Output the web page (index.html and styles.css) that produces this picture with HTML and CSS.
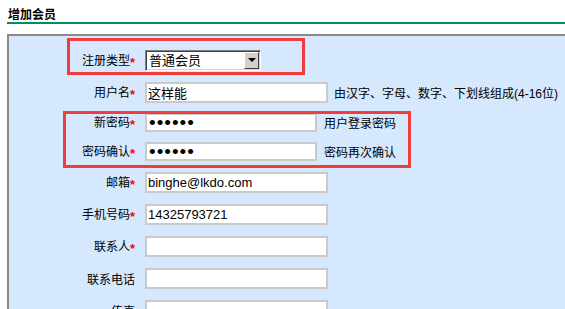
FILE: index.html
```html
<!DOCTYPE html>
<html lang="zh-CN">
  <head>
    <meta charset="UTF-8" />
    <meta name="viewport" content="width=device-width, initial-scale=1.0" />
    <title>增加会员</title>
    <link rel="stylesheet" href="styles.css">
  </head>
  <body>
    <div class="page">
      <h2 class="page-title">增加会员</h2>

      <form class="form-panel">
        <div class="row-group mark-type">
          <div class="form-row">
            <label class="form-label">注册类型<span class="req">*</span></label>
            <div class="select-box">
              <select class="select-field">
                <option>普通会员</option>
                <option>高级会员</option>
              </select>
              <span class="select-btn"><span class="select-arrow"></span></span>
            </div>
          </div>
        </div>

        <div class="form-row">
          <label class="form-label">用户名<span class="req">*</span></label>
          <input type="text" class="text-input" value="这样能" />
          <span class="hint">由汉字、字母、数字、下划线组成(4-16位)</span>
        </div>

        <div class="row-group mark-pass">
          <div class="form-row row-short">
            <label class="form-label">新密码<span class="req">*</span></label>
            <input type="password" class="text-input pass-input" value="123456" />
            <span class="hint hint-pass">用户登录密码</span>
          </div>
          <div class="form-row row-short">
            <label class="form-label">密码确认<span class="req">*</span></label>
            <input type="password" class="text-input pass-input" value="123456" />
            <span class="hint hint-pass">密码再次确认</span>
          </div>
        </div>

        <div class="form-row">
          <label class="form-label">邮箱<span class="req">*</span></label>
          <input type="text" class="text-input" value="binghe@lkdo.com" />
        </div>
        <div class="form-row">
          <label class="form-label">手机号码<span class="req">*</span></label>
          <input type="text" class="text-input" value="14325793721" />
        </div>
        <div class="form-row">
          <label class="form-label">联系人<span class="req">*</span></label>
          <input type="text" class="text-input" />
        </div>
        <div class="form-row">
          <label class="form-label">联系电话</label>
          <input type="text" class="text-input" />
        </div>
        <div class="form-row">
          <label class="form-label">传真</label>
          <input type="text" class="text-input" />
        </div>
      </form>
    </div>
  </body>
</html>
```

FILE: styles.css
```css
* {
  font-family: "Liberation Sans", "Noto Sans CJK SC", sans-serif;
}
html,
body {
  margin: 0;
  padding: 0;
  overflow: hidden;
  background-color: #fff;
}
.page {
  margin-left: 7px;
}
.page-title {
  margin: 0 0 10px 0;
  padding: 8px 0 0 1px;
  font-size: 12px;
  line-height: 14px;
  font-weight: bold;
  color: #000;
  border-bottom: 2px solid #00905a;
}
.form-panel {
  margin: 0;
  padding: 8px 0 40px 0;
  background-color: #d5e8fd;
  border-top: 2px solid #8a8a8a;
  border-left: 2px solid #8a8a8a;
}
.row-group {
  position: relative;
}
.form-row {
  display: flex;
  align-items: center;
  height: 32px;
}
.row-short {
  height: 29px;
}
.form-label {
  width: 136px;
  padding-right: 10px;
  box-sizing: border-box;
  text-align: right;
  font-size: 12px;
  color: #000;
}
.req {
  color: #f00;
  font-weight: bold;
  font-size: 13px;
  vertical-align: -2px;
}
.text-input {
  width: 183px;
  height: 21px;
  box-sizing: border-box;
  margin: 0;
  padding: 0 1px;
  border: 2px solid #cacaca;
  background-color: #fff;
  font-size: 13px;
  color: #000;
  outline: none;
}
.pass-input {
  width: 172px;
  height: 19px;
  padding: 0 2px;
  font-size: 19px;
  line-height: 15px;
  letter-spacing: 1px;
}
.hint {
  margin-left: 6px;
  font-size: 12px;
  color: #000;
  white-space: nowrap;
}
.hint-pass {
  margin-left: 7px;
}

/* windows classic style dropdown */
.select-box {
  position: relative;
  width: 116px;
  height: 21px;
  box-sizing: border-box;
  border-top: 1px solid #808080;
  border-left: 1px solid #808080;
  border-right: 1px solid #fff;
  border-bottom: 1px solid #fff;
  box-shadow: inset 1px 1px 0 #404040, inset -1px -1px 0 #d4d0c8;
  background-color: #fff;
}
.select-field {
  appearance: none;
  -webkit-appearance: none;
  width: 100%;
  height: 100%;
  margin: 0;
  padding: 0 0 0 3px;
  border: none;
  background: transparent;
  font-size: 13px;
  color: #000;
  outline: none;
}
.select-btn {
  position: absolute;
  top: 1px;
  right: 1px;
  width: 15px;
  height: 17px;
  box-sizing: border-box;
  background-color: #d4d0c8;
  border-top: 1px solid #fff;
  border-left: 1px solid #fff;
  border-right: 1px solid #404040;
  border-bottom: 1px solid #404040;
  display: flex;
  align-items: center;
  justify-content: center;
  pointer-events: none;
}
.select-arrow {
  width: 0;
  height: 0;
  border-left: 4px solid transparent;
  border-right: 4px solid transparent;
  border-top: 4px solid #000;
}

/* red marking boxes */
.mark-type::after,
.mark-pass::after {
  content: "";
  position: absolute;
  border: 3px solid #f03c3c;
  box-sizing: border-box;
  pointer-events: none;
}
.mark-type::after {
  left: 58px;
  top: -6px;
  width: 238px;
  height: 37px;
}
.mark-pass::after {
  left: 54px;
  top: 3px;
  width: 348px;
  height: 57px;
}
```
